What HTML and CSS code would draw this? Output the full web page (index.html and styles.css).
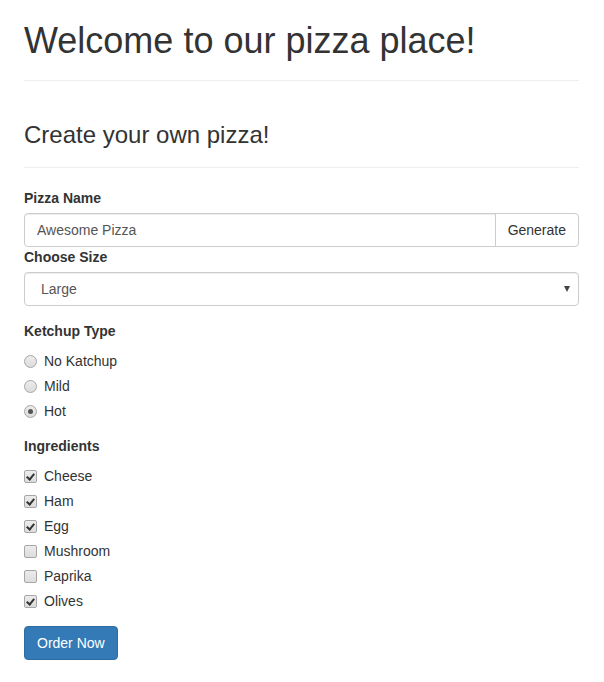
FILE: index.html
```html
<!DOCTYPE html>
<html>
<head>
<meta charset="utf-8">
<link rel="stylesheet" href="styles.css">
</head>
<body>
<div class="container">
  <div class="page-header first">
    <h1>Welcome to our pizza place!</h1>
  </div>
  <div class="page-header second">
    <h3>Create your own pizza!</h3>
  </div>
  <form class="form">
    <label class="field-label">Pizza Name</label>
    <div class="input-group">
      <input class="form-control grow" type="text" value="Awesome Pizza">
      <button type="button" class="btn btn-default">Generate</button>
    </div>
    <label class="field-label">Choose Size</label>
    <div class="select-wrap">
      <select class="form-control select">
        <option>Large</option>
      </select>
    </div>

    <div class="group">
      <label class="field-label">Ketchup Type</label>
      <div class="options">
        <label class="opt"><input type="radio" name="k" class="radio"><span>No Katchup</span></label>
        <label class="opt"><input type="radio" name="k" class="radio"><span>Mild</span></label>
        <label class="opt"><input type="radio" name="k" class="radio" checked><span>Hot</span></label>
      </div>
    </div>

    <div class="group">
      <label class="field-label">Ingredients</label>
      <div class="options">
        <label class="opt"><input type="checkbox" class="check" checked><span>Cheese</span></label>
        <label class="opt"><input type="checkbox" class="check" checked><span>Ham</span></label>
        <label class="opt"><input type="checkbox" class="check" checked><span>Egg</span></label>
        <label class="opt"><input type="checkbox" class="check"><span>Mushroom</span></label>
        <label class="opt"><input type="checkbox" class="check"><span>Paprika</span></label>
        <label class="opt"><input type="checkbox" class="check" checked><span>Olives</span></label>
      </div>
    </div>

    <div class="actions">
      <button type="button" class="btn btn-primary">Order Now</button>
    </div>
  </form>
</div>
</body>
</html>
```

FILE: styles.css
```css
* { box-sizing: border-box; }
html, body { margin: 0; padding: 0; }
body {
  font-family: "Liberation Sans", Arial, sans-serif;
  font-size: 14px;
  line-height: 20px;
  color: #333;
  background: #fff;
}
.container {
  padding: 21px 25px 0 24px;
}
.page-header {
  border-bottom: 1px solid #eee;
  padding-bottom: 9px;
}
.page-header.first { margin: 0; }
.page-header.second { margin: 41px 0 20px; }
h1, h3 {
  margin: 0 0 10px;
  font-weight: 500;
  line-height: 1.1;
  color: #333;
}
h1 { font-size: 36px; }
h3 { font-size: 24px; }

.form { display: flex; flex-direction: column; }
.field-label {
  display: block;
  font-weight: bold;
  height: 20px;
}
.input-group { display: flex; margin-top: 5px; height: 34px; }
.form-control {
  height: 34px;
  padding: 6px 12px;
  font-family: inherit;
  font-size: 14px;
  line-height: 20px;
  color: #555;
  background: #fff;
  border: 1px solid #ccc;
  border-radius: 4px;
  box-shadow: inset 0 1px 1px rgba(0,0,0,.075);
  outline: none;
  margin: 0;
}
.grow { flex: 1; min-width: 0; border-radius: 4px 0 0 4px; }
.btn {
  font-family: inherit;
  font-size: 14px;
  line-height: 20px;
  padding: 6px 12px;
  border: 1px solid transparent;
  border-radius: 4px;
  height: 34px;
  margin: 0;
  cursor: pointer;
}
.btn-default {
  background: #fff;
  color: #333;
  border-color: #ccc;
  border-radius: 0 4px 4px 0;
  margin-left: -1px;
}
.btn-primary {
  background: #337ab7;
  border-color: #2e6da4;
  color: #fff;
}
.select-wrap { position: relative; margin-top: 5px; }
.select {
  width: 100%;
  appearance: none;
  -webkit-appearance: none;
  padding-left: 16px;
  color: #555;
}
.select-wrap::after {
  content: "";
  position: absolute;
  right: 9px;
  top: 14px;
  border-left: 3.5px solid transparent;
  border-right: 3.5px solid transparent;
  border-top: 6px solid #444;
}
.group { margin-top: 15px; }
.options {
  display: flex;
  flex-direction: column;
  gap: 5px;
  margin-top: 10px;
}
.opt {
  display: flex;
  align-items: flex-start;
  height: 20px;
  font-weight: normal;
  cursor: pointer;
}
.opt span { margin-left: 7px; }
.radio, .check {
  appearance: none;
  -webkit-appearance: none;
  width: 13px;
  height: 13px;
  margin: 4px 0 0 0;
  flex: none;
  border: 1px solid #a6a6a6;
  background: linear-gradient(#ececec, #dcdcdc);
  position: relative;
}
.radio { border-radius: 50%; }
.radio:checked::after {
  content: "";
  position: absolute;
  left: 3px; top: 3px;
  width: 5px; height: 5px;
  border-radius: 50%;
  background: #555;
}
.check { border-radius: 2px; }
.check:checked::after {
  content: "";
  position: absolute;
  left: 3px;
  top: 1px;
  width: 3px;
  height: 6px;
  border: solid #333;
  border-width: 0 2px 2px 0;
  transform: rotate(40deg);
}
.actions { margin-top: 15px; }
```
